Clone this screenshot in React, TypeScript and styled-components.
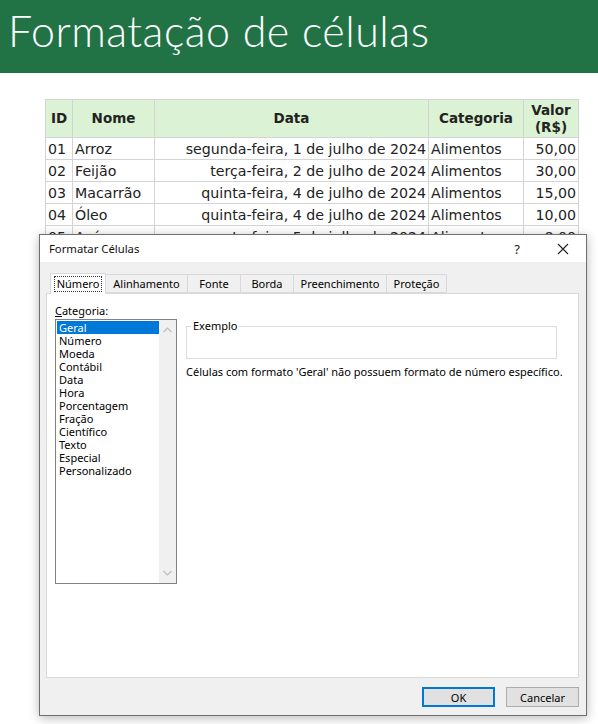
import styled, { createGlobalStyle } from 'styled-components'

const rows = [
  { id: '01', nome: 'Arroz', data: 'segunda-feira, 1 de julho de 2024', cat: 'Alimentos', valor: '50,00' },
  { id: '02', nome: 'Feijão', data: 'terça-feira, 2 de julho de 2024', cat: 'Alimentos', valor: '30,00' },
  { id: '03', nome: 'Macarrão', data: 'quinta-feira, 4 de julho de 2024', cat: 'Alimentos', valor: '15,00' },
  { id: '04', nome: 'Óleo', data: 'quinta-feira, 4 de julho de 2024', cat: 'Alimentos', valor: '10,00' },
  { id: '05', nome: 'Açúcar', data: 'sexta-feira, 5 de julho de 2024', cat: 'Alimentos', valor: '8,00' },
]

const tabs = [
  { label: 'Número', w: 56 },
  { label: 'Alinhamento', w: 83 },
  { label: 'Fonte', w: 54 },
  { label: 'Borda', w: 54 },
  { label: 'Preenchimento', w: 94 },
  { label: 'Proteção', w: 61 },
]

const categorias = [
  'Geral', 'Número', 'Moeda', 'Contábil', 'Data', 'Hora', 'Porcentagem',
  'Fração', 'Científico', 'Texto', 'Especial', 'Personalizado',
]

const App = () => {
  return (
    <Styled.Page>
      <GlobalStyle />
      <Styled.Banner>Formatação de células</Styled.Banner>

      <Styled.SheetWrap>
        <Styled.Sheet>
          <colgroup>
            <col style={{ width: 27 }} />
            <col style={{ width: 82 }} />
            <col style={{ width: 274 }} />
            <col style={{ width: 95 }} />
            <col style={{ width: 55 }} />
          </colgroup>
          <thead>
            <tr>
              <Styled.Th>ID</Styled.Th>
              <Styled.Th>Nome</Styled.Th>
              <Styled.Th>Data</Styled.Th>
              <Styled.Th>Categoria</Styled.Th>
              <Styled.Th>
                Valor
                <br />
                (R$)
              </Styled.Th>
            </tr>
          </thead>
          <tbody>
            {rows.map((r) => (
              <tr key={r.id}>
                <Styled.Td>{r.id}</Styled.Td>
                <Styled.Td>{r.nome}</Styled.Td>
                <Styled.Td $right>{r.data}</Styled.Td>
                <Styled.Td>{r.cat}</Styled.Td>
                <Styled.Td $right>{r.valor}</Styled.Td>
              </tr>
            ))}
          </tbody>
        </Styled.Sheet>
      </Styled.SheetWrap>

      <Styled.Dialog>
        <Styled.TitleBar>
          <Styled.Title>Formatar Células</Styled.Title>
          <Styled.TitleButton>?</Styled.TitleButton>
          <Styled.TitleButton>
            <svg width="12" height="12" viewBox="0 0 12 12">
              <path d="M1 1 L11 11 M11 1 L1 11" stroke="#222" strokeWidth="1.1" fill="none" />
            </svg>
          </Styled.TitleButton>
        </Styled.TitleBar>

        <Styled.Body>
          <Styled.Tabs>
            {tabs.map((t, i) => (
              <Styled.Tab key={t.label} $active={i === 0} $w={t.w}>
                {i === 0 ? <Styled.Focus>{t.label}</Styled.Focus> : t.label}
              </Styled.Tab>
            ))}
          </Styled.Tabs>

          <Styled.Panel>
            <Styled.Left>
              <Styled.Label>
                <u>C</u>ategoria:
              </Styled.Label>
              <Styled.ListBox>
                <Styled.Items>
                  {categorias.map((c, i) => (
                    <Styled.Item key={c} $selected={i === 0}>
                      {c}
                    </Styled.Item>
                  ))}
                </Styled.Items>
                <Styled.Scroll>
                  <svg width="9" height="6" viewBox="0 0 9 6">
                    <path d="M0.5 5 L4.5 1 L8.5 5" stroke="#bcbcbc" strokeWidth="1.2" fill="none" />
                  </svg>
                  <svg width="9" height="6" viewBox="0 0 9 6">
                    <path d="M0.5 1 L4.5 5 L8.5 1" stroke="#bcbcbc" strokeWidth="1.2" fill="none" />
                  </svg>
                </Styled.Scroll>
              </Styled.ListBox>
            </Styled.Left>

            <Styled.Right>
              <Styled.Group>
                <Styled.Legend>Exemplo</Styled.Legend>
              </Styled.Group>
              <Styled.Desc>
                Células com formato 'Geral' não possuem formato de número específico.
              </Styled.Desc>
            </Styled.Right>
          </Styled.Panel>

          <Styled.Footer>
            <Styled.Button $primary>OK</Styled.Button>
            <Styled.Button>Cancelar</Styled.Button>
          </Styled.Footer>
        </Styled.Body>
      </Styled.Dialog>
    </Styled.Page>
  )
}

export default App

const GlobalStyle = createGlobalStyle`
  html, body {
    margin: 0;
    background: #ffffff;
  }
`

const ui = `"Noto Sans", "Open Sans", sans-serif`
const sheetFont = `"DejaVu Sans", "Lato", sans-serif`

const Styled = {
  Page: styled.div`
    position: relative;
    width: 598px;
    height: 724px;
    overflow: hidden;
    background: #ffffff;
  `,
  Banner: styled.div`
    height: 73px;
    background: #217346;
    color: #ffffff;
    font-family: "Lato", sans-serif;
    font-weight: 300;
    font-size: 43px;
    line-height: 62px;
    padding-left: 8px;
    box-sizing: border-box;
    letter-spacing: 0.5px;
  `,
  SheetWrap: styled.div`
    padding: 26px 0 0 45px;
    height: 161px;
    box-sizing: border-box;
    overflow: hidden;
  `,
  Sheet: styled.table`
    border-collapse: collapse;
    table-layout: fixed;
    width: 533px;
    font-family: ${sheetFont};
    color: #222;
  `,
  Th: styled.th`
    background: #dcf2d4;
    border: 1px solid #d4d4d4;
    height: 37px;
    padding: 0 2px;
    font-size: 13.5px;
    font-weight: bold;
    line-height: 17px;
    text-align: center;
  `,
  Td: styled.td<{ $right?: boolean }>`
    border: 1px solid #d4d4d4;
    height: 21px;
    padding: 0 2px;
    font-size: 14.2px;
    white-space: nowrap;
    overflow: hidden;
    text-align: ${(p) => (p.$right ? 'right' : 'left')};
  `,
  Dialog: styled.div`
    position: absolute;
    left: 39px;
    top: 234px;
    width: 548px;
    height: 482px;
    box-sizing: border-box;
    background: #f0f0f0;
    border: 1px solid #6f6f6f;
    box-shadow: 0 2px 10px rgba(0, 0, 0, 0.28);
    display: flex;
    flex-direction: column;
    font-family: ${ui};
    font-size: 11px;
    color: #000;
  `,
  TitleBar: styled.div`
    height: 27px;
    flex: none;
    background: #ffffff;
    display: flex;
    align-items: center;
    padding-left: 9px;
  `,
  Title: styled.div`
    flex: 1;
    font-size: 11.3px;
    color: #111;
  `,
  TitleButton: styled.div`
    width: 46px;
    height: 27px;
    display: flex;
    align-items: center;
    justify-content: center;
    font-size: 13px;
    color: #222;
  `,
  Body: styled.div`
    flex: 1;
    display: flex;
    flex-direction: column;
    padding: 10px 7px 0 6px;
  `,
  Tabs: styled.div`
    display: flex;
    align-items: flex-end;
    padding-left: 4px;
    height: 21px;
    position: relative;
    z-index: 1;
  `,
  Tab: styled.div<{ $active?: boolean; $w: number }>`
    width: ${(p) => p.$w}px;
    height: ${(p) => (p.$active ? 21 : 19)}px;
    box-sizing: border-box;
    margin-bottom: ${(p) => (p.$active ? -1 : 0)}px;
    background: ${(p) => (p.$active ? '#ffffff' : '#f0f0f0')};
    border: 1px solid #d9d9d9;
    border-bottom: ${(p) => (p.$active ? 'none' : '1px solid #d9d9d9')};
    margin-left: ${(p) => (p.$active ? 0 : -1)}px;
    display: flex;
    align-items: center;
    justify-content: center;
  `,
  Focus: styled.span`
    outline: 1px dotted #333;
    padding: 0 2px;
    line-height: 14px;
  `,
  Panel: styled.div`
    height: 385px;
    box-sizing: border-box;
    background: #ffffff;
    border: 1px solid #d9d9d9;
    display: flex;
    gap: 9px;
    padding: 10px 9px 0 8px;
  `,
  Left: styled.div`
    flex: none;
    width: 122px;
    display: flex;
    flex-direction: column;
  `,
  Label: styled.div`
    height: 15px;
    line-height: 13px;
  `,
  ListBox: styled.div`
    height: 265px;
    box-sizing: border-box;
    border: 1px solid #828282;
    display: flex;
  `,
  Items: styled.div`
    flex: 1;
    padding: 1px 0 0 1px;
  `,
  Item: styled.div<{ $selected?: boolean }>`
    height: 13px;
    line-height: 13px;
    padding-left: 2px;
    background: ${(p) => (p.$selected ? '#0078d7' : 'transparent')};
    color: ${(p) => (p.$selected ? '#ffffff' : '#000')};
  `,
  Scroll: styled.div`
    width: 17px;
    background: #f0f0f0;
    display: flex;
    flex-direction: column;
    justify-content: space-between;
    align-items: center;
    padding: 7px 0;
  `,
  Right: styled.div`
    flex: 1;
    min-width: 0;
    display: flex;
    flex-direction: column;
    padding-top: 22px;
    padding-right: 12px;
  `,
  Group: styled.div`
    height: 31px;
    border: 1px solid #dcdcdc;
    position: relative;
  `,
  Legend: styled.span`
    position: absolute;
    left: 4px;
    top: -9px;
    background: #ffffff;
    padding: 0 2px;
    line-height: 15px;
  `,
  Desc: styled.div`
    margin-top: 5px;
    white-space: nowrap;
  `,
  Footer: styled.div`
    display: flex;
    justify-content: flex-end;
    gap: 11px;
    padding: 9px 0 0;
  `,
  Button: styled.div<{ $primary?: boolean }>`
    width: 73px;
    height: 20px;
    box-sizing: border-box;
    background: #e1e1e1;
    border: ${(p) => (p.$primary ? '2px solid #0078d7' : '1px solid #adadad')};
    display: flex;
    align-items: center;
    justify-content: center;
  `,
}
